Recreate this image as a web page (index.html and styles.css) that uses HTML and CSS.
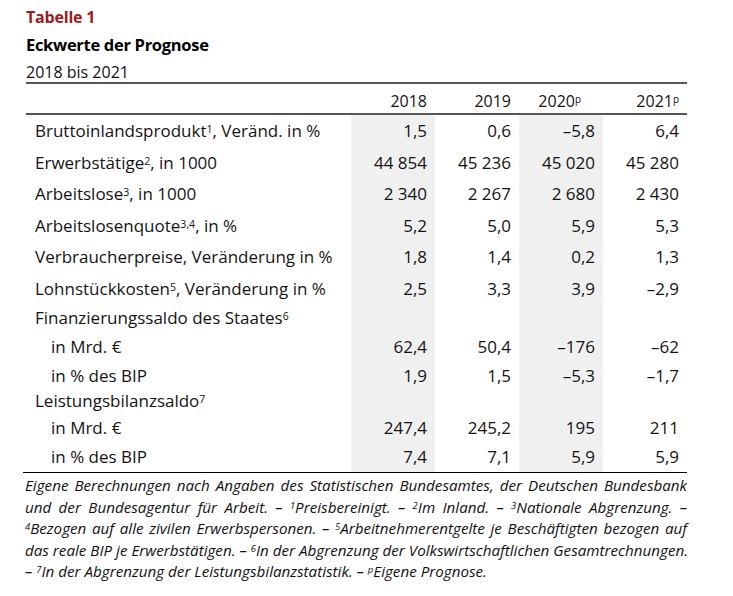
FILE: index.html
```html
<!DOCTYPE html>
<html lang="de">
<head>
<meta charset="utf-8">
<title>Tabelle 1 – Eckwerte der Prognose</title>
<link rel="stylesheet" href="styles.css">
</head>
<body>
<div class="page">
  <div class="head">
    <div class="kicker">Tabelle 1</div>
    <div class="title">Eckwerte der Prognose</div>
    <div class="sub">2018 bis 2021</div>
  </div>
  <table class="tbl">
    <colgroup>
      <col class="c-label">
      <col class="c-num shade">
      <col class="c-num">
      <col class="c-num shade">
      <col class="c-num">
    </colgroup>
    <thead>
      <tr>
        <th class="lbl"></th>
        <th>2018</th>
        <th>2019</th>
        <th class="h-2020">2020<sup>p</sup></th>
        <th>2021<sup>p</sup></th>
      </tr>
    </thead>
    <tbody>
      <tr class="main">
        <td class="lbl">Bruttoinlandsprodukt<sup>1</sup>, Veränd. in %</td>
        <td>1,5</td><td>0,6</td><td>–5,8</td><td>6,4</td>
      </tr>
      <tr class="main">
        <td class="lbl">Erwerbstätige<sup>2</sup>, in 1000</td>
        <td>44 854</td><td>45 236</td><td>45 020</td><td>45 280</td>
      </tr>
      <tr class="main">
        <td class="lbl">Arbeitslose<sup>3</sup>, in 1000</td>
        <td>2 340</td><td>2 267</td><td>2 680</td><td>2 430</td>
      </tr>
      <tr class="main">
        <td class="lbl">Arbeitslosenquote<sup>3,4</sup>, in %</td>
        <td>5,2</td><td>5,0</td><td>5,9</td><td>5,3</td>
      </tr>
      <tr class="main">
        <td class="lbl">Verbraucherpreise, Veränderung in %</td>
        <td>1,8</td><td>1,4</td><td>0,2</td><td>1,3</td>
      </tr>
      <tr class="main">
        <td class="lbl">Lohnstückkosten<sup>5</sup>, Veränderung in %</td>
        <td>2,5</td><td>3,3</td><td>3,9</td><td>–2,9</td>
      </tr>
      <tr class="grp r-fin">
        <td class="lbl">Finanzierungssaldo des Staates<sup>6</sup></td>
        <td></td><td></td><td></td><td></td>
      </tr>
      <tr class="r-a">
        <td class="lbl ind">in Mrd. €</td>
        <td>62,4</td><td>50,4</td><td>–176</td><td>–62</td>
      </tr>
      <tr class="r-b">
        <td class="lbl ind">in % des BIP</td>
        <td>1,9</td><td>1,5</td><td>–5,3</td><td>–1,7</td>
      </tr>
      <tr class="grp r-lei">
        <td class="lbl">Leistungsbilanzsaldo<sup>7</sup></td>
        <td></td><td></td><td></td><td></td>
      </tr>
      <tr class="r-c">
        <td class="lbl ind">in Mrd. €</td>
        <td>247,4</td><td>245,2</td><td>195</td><td>211</td>
      </tr>
      <tr class="r-d">
        <td class="lbl ind">in % des BIP</td>
        <td>7,4</td><td>7,1</td><td>5,9</td><td>5,9</td>
      </tr>
    </tbody>
  </table>
  <div class="notes">
    <span class="ln">Eigene Berechnungen nach Angaben des Statistischen Bundesamtes, der Deutschen Bundesbank</span>
    <span class="ln">und der Bundesagentur für Arbeit. – <sup>1</sup>Preisbereinigt. – <sup>2</sup>Im Inland. – <sup>3</sup>Nationale Abgrenzung. –</span>
    <span class="ln"><sup>4</sup>Bezogen auf alle zivilen Erwerbspersonen. – <sup>5</sup>Arbeitnehmerentgelte je Beschäftigten bezogen auf</span>
    <span class="ln">das reale BIP je Erwerbstätigen. – <sup>6</sup>In der Abgrenzung der Volkswirtschaftlichen Gesamtrechnungen.</span>
    <span class="ln last">– <sup>7</sup>In der Abgrenzung der Leistungsbilanzstatistik. – <sup>p</sup>Eigene Prognose.</span>
  </div>
</div>
</body>
</html>
```

FILE: styles.css
```css
* { box-sizing: border-box; }

html, body {
  margin: 0;
  padding: 0;
  background: #ffffff;
}

body {
  font-family: "Open Sans", Lato, "DejaVu Sans", sans-serif;
  color: #141414;
}

.page {
  padding: 4px 0 0 23px;
  width: 733px;
}

.head {
  padding-left: 3px;
}

.kicker {
  font-size: 16px;
  font-weight: 700;
  line-height: 27px;
  color: #9b1b20;
  letter-spacing: -0.2px;
}

.title {
  font-size: 16.5px;
  font-weight: 700;
  line-height: 27px;
  color: #000;
  letter-spacing: -0.3px;
}

.sub {
  font-size: 16px;
  line-height: 20px;
  padding-top: 4px;
  color: #111;
}

sup {
  font-size: 0.62em;
  line-height: 0;
  vertical-align: 0.42em;
}

.tbl {
  margin-left: 3px;
  border-collapse: separate;
  border-spacing: 0;
  width: 661px;
  table-layout: fixed;
  font-size: 17px;
}

.c-label { width: 325px; }
.c-num { width: 84px; }
.shade { background: #f0f0f0; }

.tbl th {
  background: #ffffff;
  font-size: 16px;
  font-weight: 400;
  text-align: right;
  padding: 5px 8px 0 0;
  line-height: 24px;
  border-top: 2px solid #555;
  border-bottom: 2px solid #555;
}

.tbl th.h-2020 { padding-right: 22px; }

.tbl td {
  text-align: right;
  padding: 0 8px 0 0;
  white-space: nowrap;
  vertical-align: middle;
}

.tbl td.lbl {
  text-align: left;
  padding-left: 9px;
}

.tbl td.ind { padding-left: 25px; }

.main td { line-height: 31.5px; }
.r-fin td { line-height: 28px; }
.r-a td { line-height: 30px; }
.r-b td { line-height: 27px; }
.r-lei td { line-height: 24px; }
.r-c td { line-height: 30px; }
.r-d td { line-height: 27px; padding-bottom: 2px; }

.notes {
  width: 664px;
  border-top: 1px solid #000;
  padding: 2px 0 0 2px;
  font-size: 15.2px;
  font-style: italic;
  line-height: 21.6px;
  color: #111;
}

.notes .ln {
  display: block;
  white-space: nowrap;
  text-align: justify;
  text-align-last: justify;
}

.notes .ln.last {
  text-align: left;
  text-align-last: left;
}
```
